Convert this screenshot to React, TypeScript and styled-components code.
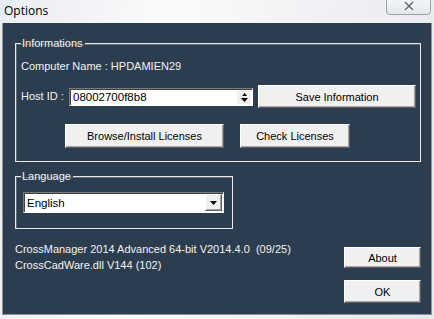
import React from 'react';
import styled, { createGlobalStyle } from 'styled-components';

const GlobalStyle = createGlobalStyle`
  body {
    margin: 0;
    background: #f4f5f7;
  }
`;

const Window = styled.div`
  width: 434px;
  height: 319px;
  display: flex;
  flex-direction: column;
  background: linear-gradient(100deg, #e9ecf0 0%, #fbfbfc 35%, #f2f3f5 60%, #e6e9ed 100%);
  font-family: 'Liberation Sans', Arial, sans-serif;
  font-size: 11px;
  overflow: hidden;
`;

const TitleBar = styled.div`
  height: 23px;
  display: flex;
  align-items: flex-start;
  justify-content: space-between;
  padding: 0 3px 0 4px;
  box-sizing: border-box;
`;

const Title = styled.div`
  font-family: 'Open Sans', 'Noto Sans', sans-serif;
  font-size: 12px;
  color: #000;
  margin-top: 2px;
`;

const CloseButton = styled.div`
  width: 45px;
  height: 19px;
  margin-top: -4px;
  border: 1px solid #9aa0a8;
  border-radius: 0 0 4px 4px;
  background: linear-gradient(#f6f7f9, #e4e7eb);
  display: flex;
  align-items: flex-end;
  justify-content: center;
  padding-bottom: 3px;
  box-sizing: border-box;
`;

const Panel = styled.div`
  margin: 0 2px 0 2px;
  height: 292px;
  background: #2c3d4f;
  border: 1px solid #8c959f;
  border-top: none;
  box-sizing: border-box;
  color: #f2f2f2;
  display: flex;
  flex-direction: column;
  padding: 14px 10px 0 12px;
`;

const Group = styled.fieldset<{ w: number; h: number }>`
  margin: 0;
  width: ${({ w }) => w}px;
  height: ${({ h }) => h}px;
  box-sizing: border-box;
  border: 1px solid #e6e8ea;
  box-shadow: inset 1px 1px 0 #5d6b79;
  padding: 0;
  min-inline-size: 0;
`;

const Legend = styled.legend`
  padding: 0 2px 0 1px;
  margin-left: 5px;
  font-size: 11px;
  line-height: 13px;
  color: #f2f2f2;
`;

const GroupBody = styled.div<{ pt: number; pl: number }>`
  display: flex;
  flex-direction: column;
  padding: ${({ pt, pl }) => `${pt}px 0 0 ${pl}px`};
`;

const Row = styled.div<{ gap?: number; mt?: number; ml?: number }>`
  display: flex;
  align-items: center;
  gap: ${({ gap }) => gap || 0}px;
  margin-top: ${({ mt }) => mt || 0}px;
  margin-left: ${({ ml }) => ml || 0}px;
`;

const Label = styled.div<{ w?: number }>`
  line-height: 13px;
  white-space: nowrap;
  width: ${({ w }) => (w ? `${w}px` : 'auto')};
`;

const Button = styled.div<{ w: number; h: number }>`
  width: ${({ w }) => w}px;
  height: ${({ h }) => h}px;
  box-sizing: border-box;
  background: #f0f0f0;
  border: 1px solid;
  border-color: #ffffff #5f5f5f #5f5f5f #ffffff;
  box-shadow: inset -1px -1px 0 #a3a3a3;
  color: #000;
  display: flex;
  align-items: center;
  justify-content: center;
  font-size: 11px;
  white-space: nowrap;
`;

const Sunken = styled.div<{ w: number; h: number }>`
  width: ${({ w }) => w}px;
  height: ${({ h }) => h}px;
  box-sizing: border-box;
  background: #fff;
  border: 1px solid;
  border-color: #7a7a7a #ffffff #ffffff #7a7a7a;
  box-shadow: inset 1px 1px 0 #404040;
  display: flex;
  align-items: center;
  color: #000;
  padding-left: 3px;
`;

const FieldText = styled.div`
  flex: 1;
  font-size: 11.5px;
`;

const Spinner = styled.div`
  width: 14px;
  height: 14px;
  margin-right: 1px;
  background: #f0f0f0;
  display: flex;
  flex-direction: column;
  align-items: center;
  justify-content: space-between;
  padding: 3px 0 2px;
  box-sizing: border-box;
`;

const DropButton = styled.div`
  width: 17px;
  height: 17px;
  margin-right: 1px;
  box-sizing: border-box;
  background: #f0f0f0;
  border: 1px solid;
  border-color: #ffffff #5f5f5f #5f5f5f #ffffff;
  box-shadow: inset -1px -1px 0 #a3a3a3;
  display: flex;
  align-items: center;
  justify-content: center;
`;

const Footer = styled.div`
  display: flex;
  justify-content: space-between;
  margin-top: 11px;
`;

const VersionInfo = styled.div`
  display: flex;
  flex-direction: column;
  padding-top: 1px;
`;

const VersionLine = styled.div`
  line-height: 16px;
  height: 16px;
  white-space: pre;
`;

const ButtonColumn = styled.div`
  display: flex;
  flex-direction: column;
  gap: 12px;
  padding-top: 7px;
`;

const App = () => (
  <Window>
    <GlobalStyle />
    <TitleBar>
      <Title>Options</Title>
      <CloseButton>
        <svg width="12" height="10" viewBox="0 0 12 10">
          <path d="M2 1 L10 9 M10 1 L2 9" stroke="#fff" strokeWidth="3.4" />
          <path d="M2 1 L10 9 M10 1 L2 9" stroke="#5e6670" strokeWidth="1.6" />
        </svg>
      </CloseButton>
    </TitleBar>
    <Panel>
      <Group w={406} h={125}>
        <Legend>Informations</Legend>
        <GroupBody pt={10} pl={5}>
          <Label>Computer Name : HPDAMIEN29</Label>
          <Row mt={12}>
            <Label w={48}>Host ID :</Label>
            <Sunken w={184} h={18}>
              <FieldText>08002700f8b8</FieldText>
              <Spinner>
                <svg width="5" height="3" viewBox="0 0 5 3"><path d="M2.5 0 L5 3 L0 3 Z" fill="#000" /></svg>
                <svg width="7" height="4" viewBox="0 0 7 4"><path d="M0 0 L7 0 L3.5 4 Z" fill="#000" /></svg>
              </Spinner>
            </Sunken>
            <Row ml={5}>
              <Button w={158} h={23}>Save Information</Button>
            </Row>
          </Row>
          <Row mt={16} ml={44} gap={16}>
            <Button w={159} h={24}>Browse/Install Licenses</Button>
            <Button w={110} h={24}>Check Licenses</Button>
          </Row>
        </GroupBody>
      </Group>
      <Row mt={8}>
        <Group w={218} h={59}>
          <Legend>Language</Legend>
          <GroupBody pt={9} pl={7}>
            <Sunken w={201} h={21}>
              <FieldText>English</FieldText>
              <DropButton>
                <svg width="7" height="4" viewBox="0 0 7 4"><path d="M0 0 L7 0 L3.5 4 Z" fill="#000" /></svg>
              </DropButton>
            </Sunken>
          </GroupBody>
        </Group>
      </Row>
      <Footer>
        <VersionInfo>
          <VersionLine>{'CrossManager 2014 Advanced 64-bit V2014.4.0  (09/25)'}</VersionLine>
          <VersionLine>CrossCadWare.dll V144 (102)</VersionLine>
        </VersionInfo>
        <ButtonColumn>
          <Button w={77} h={21}>About</Button>
          <Button w={77} h={23}>OK</Button>
        </ButtonColumn>
      </Footer>
    </Panel>
  </Window>
);

export default App;
